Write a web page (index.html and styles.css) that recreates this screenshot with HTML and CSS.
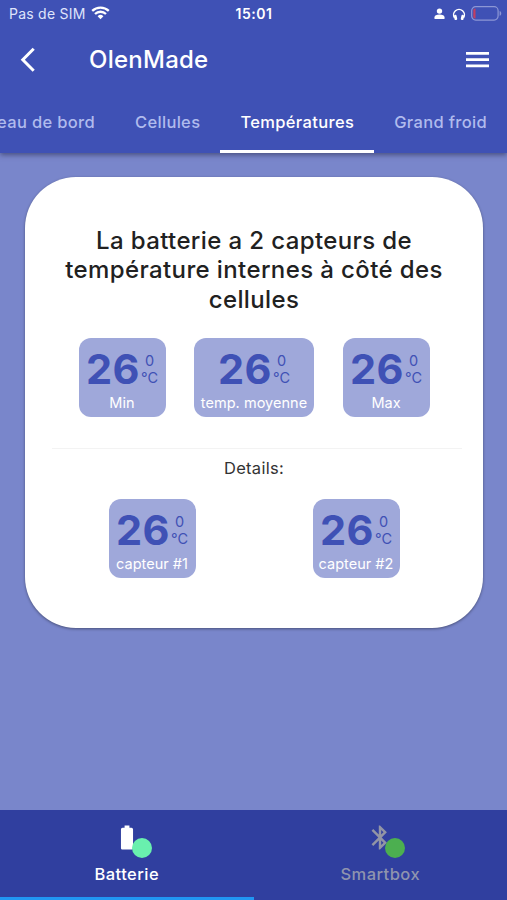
FILE: index.html
```html
<!DOCTYPE html>
<html lang="fr">
<head>
<meta charset="utf-8">
<title>OlenMade</title>
<link rel="stylesheet" href="styles.css">
</head>
<body>
<div class="app">
  <header class="top">
    <div class="status">
      <div class="carrier"><span>Pas de SIM</span>
        <svg width="19" height="14" viewBox="0 0 19 14" fill="none" stroke="#fff" stroke-width="2.3"><path d="M1.200 4.900a12 12 0 0 1 16.600 0M4 8a7.900 7.900 0 0 1 11 0"/><path d="M6.600 10.200a4.200 4.200 0 0 1 5.800 0L9.500 13.200z" fill="#fff" stroke="none"/></svg>
      </div>
      <div class="time">15:01</div>
      <div class="indicators">
        <svg width="11" height="12" viewBox="0 0 11 12" fill="#fff"><circle cx="5.5" cy="3.1" r="2.7"/><path d="M.5 11V9.300C.5 7.600 2.500 6.600 5.500 6.600s5 1 5 2.700V11z"/></svg>
        <svg class="headphones" width="14" height="14" viewBox="0 0 14 14"><path d="M2.500 10.800A5.400 5.400 0 1 1 11.500 10.800" fill="none" stroke="#fff" stroke-width="1.5"/><rect x="2.2" y="7.8" width="2.7" height="5.3" rx="1.2" fill="#fff" transform="rotate(-12 3.5 10.4)"/><rect x="9.1" y="7.8" width="2.7" height="5.3" rx="1.2" fill="#fff" transform="rotate(12 10.5 10.4)"/></svg>
        <svg class="power" width="31" height="15" viewBox="0 0 31 15"><rect x=".7" y=".7" width="26.4" height="13.4" rx="4" fill="none" stroke="#8d97d5" stroke-width="1.2"/><path d="M4.500 2.400v10H4a1.700 1.700 0 0 1-1.700-1.700V4.100A1.700 1.700 0 0 1 4 2.400z" fill="#c33e61"/><path d="M28.600 5c2.200.5 2.200 4.300 0 4.800z" fill="#8d97d5"/></svg>
      </div>
    </div>
    <div class="appbar">
      <svg class="back" width="16" height="26" viewBox="0 0 16 26" fill="none" stroke="#fff" stroke-width="3"><path d="M13.700 1.700 2.800 12.700 13.700 23.700"/></svg>
      <h1>OlenMade</h1>
      <svg class="menu" width="23" height="18" viewBox="0 0 23 18" fill="#fff"><path d="M0 1h23v2.700H0zM0 7.300h23V10H0zM0 13.600h23v2.700H0z"/></svg>
    </div>
    <nav class="tabs">
      <div class="tab"><span>Tableau de bord</span></div>
      <div class="tab"><span>Cellules</span></div>
      <div class="tab active"><span>Températures</span></div>
      <div class="tab"><span>Grand froid</span></div>
    </nav>
  </header>
  <main>
    <section class="card">
      <h2>La batterie a 2 capteurs de<br>température internes à côté des<br>cellules</h2>
      <div class="row">
        <div class="chip"><div class="reading"><b>26</b><div class="unit"><span>0</span><span>°C</span></div></div><div class="label">Min</div></div>
        <div class="chip wide"><div class="reading"><b>26</b><div class="unit"><span>0</span><span>°C</span></div></div><div class="label">temp. moyenne</div></div>
        <div class="chip"><div class="reading"><b>26</b><div class="unit"><span>0</span><span>°C</span></div></div><div class="label">Max</div></div>
      </div>
      <hr>
      <p class="details">Details:</p>
      <div class="row sensors">
        <div class="chip"><div class="reading"><b>26</b><div class="unit"><span>0</span><span>°C</span></div></div><div class="label">capteur #1</div></div>
        <div class="chip"><div class="reading"><b>26</b><div class="unit"><span>0</span><span>°C</span></div></div><div class="label">capteur #2</div></div>
      </div>
    </section>
  </main>
  <footer>
    <div class="dest selected">
      <div class="icon"><svg width="30" height="29" viewBox="0 0 24 24" fill="#fff"><path d="M15.670 4H14V2h-4v2H8.330C7.600 4 7 4.600 7 5.330v15.330C7 21.400 7.600 22 8.330 22h7.330c.74 0 1.340-.6 1.340-1.330V5.330C17 4.600 16.400 4 15.670 4z"/></svg><i class="dot mint"></i></div>
      <span class="name">Batterie</span>
    </div>
    <div class="dest">
      <div class="icon"><svg width="30" height="29" viewBox="0 0 24 24" fill="#9295a5"><path d="M17.710 7.710 12 2h-1v7.590L6.410 5 5 6.410 10.590 12 5 17.590 6.410 19 11 14.410V22h1l5.710-5.710-4.300-4.290 4.300-4.290zM13 5.830l1.880 1.880L13 9.590V5.830zm1.880 10.460L13 18.170v-3.760l1.880 1.880z"/></svg><i class="dot green"></i></div>
      <span class="name">Smartbox</span>
    </div>
  </footer>
</div>
</body>
</html>
```
FILE: styles.css
```css
* { box-sizing: border-box; }
body { margin: 0; font-family: Inter, "Liberation Sans", sans-serif; background: #7986cb; }
svg { display: block; flex: none; }
h1, h2, p { margin: 0; font-weight: 450; }
.app { width: 507px; height: 900px; overflow: hidden; display: flex; flex-direction: column; background: #7986cb; }

.top { flex: none; height: 153px; background: #3f51b5; color: #fff; box-shadow: 0 2px 5px rgba(40, 45, 80, .6); }
.status { height: 28px; display: grid; grid-template-columns: 1fr auto 1fr; align-items: center; padding: 0 7px 2px 9px; }
.carrier { display: flex; align-items: center; gap: 5px; font-size: 14px; letter-spacing: .24px; color: #dfe4fb; }
.carrier svg { margin-top: -1px; }
.time { font-size: 14px; font-weight: 600; letter-spacing: .5px; margin-right: 1px; }
.indicators { display: flex; justify-content: flex-end; align-items: center; margin-top: 1px; }
.headphones { margin-left: 7px; }
.power { margin-left: 5px; margin-right: -2px; margin-top: -1px; }
.appbar { height: 62px; display: flex; align-items: center; padding: 2px 18px 0 20px; }
.appbar h1 { margin-left: 53px; font-size: 24px; line-height: 30px; letter-spacing: .25px; }
.menu { margin-left: auto; }

.tabs { height: 63px; display: flex; justify-content: flex-end; }
.tab { flex: none; padding: 3px 20px 0; height: 63px; display: flex; align-items: center; font-size: 16.5px; font-weight: 450; letter-spacing: .33px; color: #b0bbed; white-space: nowrap; border-bottom: 3px solid transparent; }
.tab.active { color: #fff; font-weight: 500; letter-spacing: .35px; border-bottom-color: #fff; }

main { flex: 1; padding: 24px 24px 0 25px; }
.card { height: 451px; border-radius: 51px; background: #fff; box-shadow: 0 1px 3px rgba(0, 0, 0, .4); padding: 49px 21px 0 27px; }
.card h2 { text-align: center; font-size: 24px; line-height: 29.3px; color: #212121; letter-spacing: .38px; margin: 0 3px 0 -3px; }
.row { display: flex; justify-content: center; gap: 28.5px; margin: 24px 6px 0 0; }
.chip { width: 87px; height: 79px; border-radius: 12px; background: #9fa8da; color: #3f51b5; padding-top: 7px; text-align: center; }
.chip.wide { width: 120px; }
.reading { display: flex; justify-content: center; height: 48px; padding-left: 1px; }
.reading b { width: 53px; font-size: 41.5px; line-height: 48px; font-weight: 700; letter-spacing: .4px; }
.unit { width: 19px; margin-left: 1px; display: flex; flex-direction: column; align-items: center; padding-top: 7px; font-size: 14.5px; line-height: 17px; white-space: nowrap; }
.label { font-size: 14.5px; line-height: 19px; color: #fff; white-space: nowrap; letter-spacing: .03px; }
hr { border: 0; height: 1px; background: #f3f3f3; margin: 31px 0 0; }
.details { text-align: center; font-size: 16.5px; line-height: 20px; font-weight: 400; color: #333; letter-spacing: .3px; margin: 9px 6px 0 0; }
.sensors { gap: 117px; margin-top: 21.5px; }

footer { height: 90px; flex: none; background: #303f9f; display: flex; }
.dest { flex: 1; display: flex; flex-direction: column; align-items: center; color: #8f94ae; border-bottom: 3px solid transparent; padding-top: 13px; }
.dest.selected { color: #fff; border-bottom-color: #2196f3; }
.icon { position: relative; height: 39px; }
.dot { position: absolute; left: 20px; top: 15px; width: 20px; height: 20px; border-radius: 50%; }
.mint { background: #69f0ae; }
.green { background: #4caf50; }
.name { font-size: 16.5px; line-height: 24px; font-weight: 500; letter-spacing: .45px; }
```
